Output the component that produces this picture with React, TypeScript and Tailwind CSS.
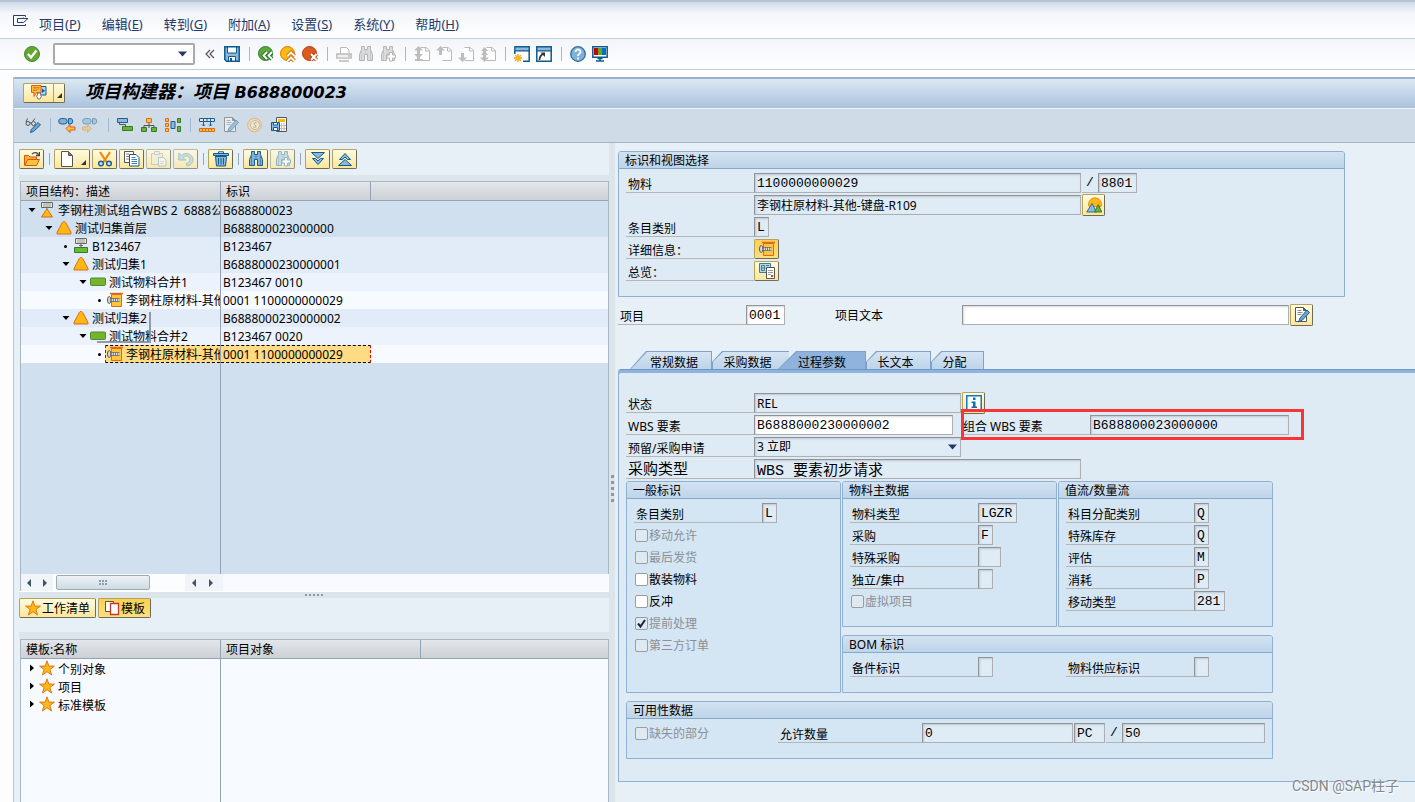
import React, { useState } from 'react';

type Kids = { children?: React.ReactNode };

/* ---------- icon primitives ---------- */

function Ico({ children, w = 16, h = 16 }: Kids & { w?: number; h?: number }) {
  return (
    <svg width={w} height={h} viewBox={`0 0 ${w} ${h}`} fill="none" aria-hidden="true" className="shrink-0">
      {children}
    </svg>
  );
}

const MenuIcon = () => (
  <Ico>
    <path d="M12.500 4V2.500H.5v10h12V11M4.500 5.500h6V4.500M4.500 5.500v4h6l4.500-4h-4.500" stroke="#2b3c66" />
  </Ico>
);
const OkIcon = () => (
  <Ico>
    <circle cx="8" cy="8" r="7.500" fill="#64a832" stroke="#3f8a2f" />
    <path d="M4 8l3 3.500L12.500 4.500" stroke="#fff" strokeWidth="2.200" />
  </Ico>
);
const SaveIcon = () => (
  <Ico>
    <path d="M.8.8h14.400v14.400H2.500L.8 13.500z" fill="#8db7dc" stroke="#0d5b8f" strokeWidth="1.500" />
    <path d="M3.500 1v6h9V1z" fill="#fff" stroke="#0d5b8f" />
    <path d="M4.500 10.500h7V15h-7z" fill="#fff" stroke="#0d5b8f" />
    <path d="M6 12h2v3H6z" fill="#0d5b8f" />
  </Ico>
);
const BackIcon = () => (
  <Ico>
    <circle cx="7.500" cy="7.500" r="7" fill="#5fa63b" stroke="#2f7d32" />
    <path d="M9 6L5.500 9.500 9 13M14 6l-3.500 3.500L14 13" stroke="#2f7d32" strokeWidth="4" />
    <path d="M9 6L5.500 9.500 9 13M14 6l-3.500 3.500L14 13" stroke="#fff" strokeWidth="1.800" />
  </Ico>
);
const ExitIcon = () => (
  <Ico>
    <circle cx="7.500" cy="7.500" r="7" fill="#fcb814" stroke="#dd7500" />
    <path d="M7.500 10L11 6.500l3.500 3.500M7.500 15l3.500-3.500 3.500 3.500" stroke="#dd7500" strokeWidth="4" />
    <path d="M7.500 10L11 6.500l3.500 3.500M7.500 15l3.500-3.500 3.500 3.500" stroke="#fff" strokeWidth="1.800" />
  </Ico>
);
const CancelIcon = () => (
  <Ico>
    <circle cx="7.500" cy="7.500" r="7" fill="#dc5a1e" stroke="#b83b12" />
    <path d="M9 8l5.500 6M14.500 8L9 14" stroke="#b83b12" strokeWidth="4" />
    <path d="M9 8l5.500 6M14.500 8L9 14" stroke="#fff" strokeWidth="2" />
  </Ico>
);
const PrintIcon = () => (
  <Ico>
    <path d="M4.500 7V1.500h6L13 4v3" fill="#fff" stroke="#b9b9b9" />
    <path d="M.8 8h14.400v4.200H.8z" fill="#eee" stroke="#b9b9b9" strokeWidth="1.300" />
    <path d="M12 10h2M3 15h10" stroke="#b9b9b9" strokeWidth="1.500" />
  </Ico>
);
function Binocular({ line, fill, plus }: { line: string; fill: string; plus?: boolean }) {
  return (
    <Ico>
      <path d="M3.500.500h3v3h3v-3h3v3l2 5v6h-5v-6h-3v6h-5v-6l2-5z" fill={fill} stroke={line} />
      <path d="M8 4v5M3.500 5v9M12.500 5v9" stroke={line} strokeOpacity=".5" />
      {plus && <path d="M9.500 6.500h3v2.500h3v3h-3v3h-3v-3h-2.500v-3h2.500z" fill="#fff" stroke={line} />}
    </Ico>
  );
}
function PageNav({ up, down, top, bottom }: { up?: boolean; down?: boolean; top?: boolean; bottom?: boolean }) {
  return (
    <Ico>
      <path d="M6.500 1.500h5.500l3.500 3v10H6.500" fill="#fff" stroke="#b9b9b9" />
      <path d="M11.500 1.500V5H15" stroke="#b9b9b9" />
      {up && <path d="M4.500 0l4.500 4.500H6V9H3V4.500H0z" fill="#bdbdbd" />}
      {down && <path d="M4.500 16L9 11.500H6V7H3v4.500H0z" fill="#bdbdbd" />}
      {top && <path d="M4.500 0L9 4.500H6V8h3l-3 3v2h3v2H1v-2h2v-2L0 8h3V4.500H0z" fill="#bdbdbd" />}
      {bottom && <path d="M4.500 16L9 11.500H6V9h2L6 6.500V5h2L4.500 1 1 5h2v1.500L1 9h2v2.500H0z" fill="#bdbdbd" />}
    </Ico>
  );
}
const NewSessionIcon = () => (
  <Ico>
    <path d="M.8.800h14.400v14.400H9" fill="#fff" stroke="#0d5b8f" strokeWidth="1.500" />
    <path d="M.8.800h14.400v4H.8z" fill="#8db7dc" stroke="#0d5b8f" strokeWidth="1.300" />
    <path d="M.8 5v3" stroke="#0d5b8f" strokeWidth="1.500" />
    <path d="M4 8v8M0 12h8M1.200 9.200l5.600 5.600M6.800 9.200l-5.600 5.600" stroke="#f3a21b" strokeWidth="1.400" />
    <circle cx="4" cy="12" r="2.300" fill="#fcb814" />
  </Ico>
);
const ShortcutIcon = () => (
  <Ico>
    <path d="M.8.800h14.400v14.400H.8z" fill="#fff" stroke="#0d5b8f" strokeWidth="1.500" />
    <path d="M.8.800h14.400v4H.8z" fill="#8db7dc" stroke="#0d5b8f" strokeWidth="1.300" />
    <path d="M3.500 14c0-3 1-4.500 3.500-6" stroke="#333" strokeWidth="1.700" />
    <path d="M4.500 6.500H9V11z" fill="#333" />
  </Ico>
);
const HelpIcon = () => (
  <Ico>
    <circle cx="8" cy="8" r="7.300" fill="#7fb0d8" stroke="#2f6f9f" strokeWidth="1.300" />
    <path d="M5.500 6c0-3.500 5.200-3.200 5 0C10.400 7.800 8 7.800 8 10" stroke="#fff" strokeWidth="1.800" />
    <path d="M7 11.500h2v2H7z" fill="#fff" />
  </Ico>
);
const MonitorIcon = () => (
  <Ico>
    <path d="M.8.800h14.400v10.400H.8z" fill="#fff" stroke="#0d5b8f" strokeWidth="1.500" />
    <path d="M2 2h4v7H2z" fill="#c90000" />
    <path d="M6 2h4v7H6z" fill="#63a820" />
    <path d="M10 2h4v7h-4z" fill="#0a6fb8" />
    <path d="M8 11v4M4 15h8M5.500 12.500h5" stroke="#0d5b8f" strokeWidth="1.500" />
  </Ico>
);
const BuilderIcon = () => (
  <Ico>
    <path d="M9 1.500h6v8.500h-6z" fill="#b9d3ea" stroke="#0d5b8f" />
    <path d="M11 3.500l3 2.300-3 2.200z" fill="#0d5b8f" />
    <path d="M.5.500h9.500v7H5.500L3 11.500V7.500H.5z" fill="#fcc23c" stroke="#dd5a1c" />
    <path d="M2 2.500h6.500M2 4h6.500M2 5.500h4" stroke="#dd6b1c" strokeWidth=".8" />
    <path d="M6.500 10V8h3v2l1 1-1.500 3h-2l-1.500-3z" fill="#fff" stroke="#777" />
  </Ico>
);
const ToggleIcon = () => (
  <Ico>
    <circle cx="3" cy="6.500" r="2" stroke="#555" />
    <circle cx="8.500" cy="6.500" r="2" stroke="#555" />
    <path d="M5 6h1.500M1 5l1.500-3.500M8 4l2-2.500" stroke="#555" />
    <path d="M13 5.500l2.500 2.500-7 6.500-3 1 .8-3z" fill="#6fa4cf" stroke="#1d5f8f" />
  </Ico>
);
function ArrowChip({ left, faded }: { left?: boolean; faded?: boolean }) {
  return (
    <svg width="18" height="16" viewBox="0 0 18 16" fill="none" className={faded ? 'opacity-50' : ''} aria-hidden="true">
      <rect x=".7" y="1.500" width="8.500" height="5.500" rx="2.700" fill="#7fb0d8" stroke="#1d5f8f" />
      <path d="M10.500 1.500h1.500a2.700 2.700 0 010 5.500h-1.500z" fill="#7fb0d8" stroke="#1d5f8f" />
      {left ? (
        <path d="M8 11.500l4-4v2.500h5v3h-5v2.500z" fill="#fcc23c" stroke="#dd5a1c" />
      ) : (
        <path d="M9.500 11.500l-4-4v2.500H.500v3h5v2.500z" fill="#fcc23c" stroke="#dd8a3c" />
      )}
    </svg>
  );
}
const BarsIcon = () => (
  <Ico>
    <path d="M.5 1.500h10v4h-10z" fill="#8db7dc" stroke="#1d5f8f" />
    <path d="M5.500 9.500h10v4h-10z" fill="#6fb02f" stroke="#2f7d32" />
    <path d="M2.500 6v1.500h6v2" stroke="#555" />
  </Ico>
);
const HierIcon = () => (
  <Ico>
    <path d="M8 6v2.500M3 11V8.500h10V11M8 8v3" stroke="#555" />
    <path d="M5.500 1.500h5v4h-5z" fill="#fcc23c" stroke="#dd6b1c" />
    <path d="M.500 10.500h5v4h-5zM10.500 10.500h5v4h-5z" fill="#6fb02f" stroke="#2f7d32" />
  </Ico>
);
const NetIcon = () => (
  <Ico>
    <path d="M.5 1.500h3v3h-3zM.5 6.500h3v3h-3zM.5 11.500h3v3h-3z" fill="#fcc23c" stroke="#dd6b1c" />
    <path d="M6 4.500h4v7H6z" fill="#8db7dc" stroke="#1d5f8f" />
    <path d="M12.500 1.500h3v4h-3zM12.500 9.500h3v5h-3z" fill="#6fb02f" stroke="#2f7d32" />
  </Ico>
);
const PlanIcon = () => (
  <Ico>
    <path d="M.5 1.500h15v3H.5zM4.500 1.500v3M8 1.500v3M11.500 1.500v3" fill="#dbe7f1" stroke="#1d5f8f" />
    <path d="M4.500 5v4M3 7.500l1.500 1.500L6 7.500M11.500 5v4M10 7.500l1.500 1.500L13 7.500" stroke="#1d5f8f" />
    <path d="M.5 11.500h15v3H.5z" fill="#fcc23c" stroke="#dd6b1c" />
    <path d="M3.500 11.500v3M6.500 11.500v3M9.500 11.500v3M12.500 11.500v3" stroke="#dd6b1c" />
  </Ico>
);
const DocEditIcon = ({ faded = true }: { faded?: boolean }) => (
  <svg width="16" height="16" viewBox="0 0 16 16" fill="none" className={faded ? 'opacity-50' : ''} aria-hidden="true">
    <path d="M1.500.500h8l3 3v11h-11z" fill="#fff" stroke="#555" />
    <path d="M9.500.500v3h3" fill="#555" stroke="#555" />
    <path d="M3.500 3.500h4M3.500 5.500h5M3.500 7.500h4" stroke="#888" />
    <path d="M13 3l2.500 2.500-7 7.500-4 2 1.500-4z" fill="#6fa4cf" stroke="#1d5f8f" />
  </svg>
);
const CoinIcon = () => (
  <svg width="16" height="16" viewBox="0 0 16 16" fill="none" className="opacity-60" aria-hidden="true">
    <circle cx="7.500" cy="8" r="6.800" fill="#fbdc9b" stroke="#d99a50" />
    <circle cx="8" cy="8" r="4.500" fill="#fff1cf" stroke="#d99a50" />
    <path d="M9.500 6C7.500 5 6 6.500 8 8s.5 3-1.500 2" stroke="#a87030" />
  </svg>
);
const SheetSaveIcon = () => (
  <Ico>
    <path d="M5.500.500h10v14h-10z" fill="#fff" stroke="#555" />
    <path d="M7 2h7v3H7z" fill="#fcb814" />
    <path d="M10.500 6v8M13 6v8M9 8.500h6M9 11.500h6" stroke="#bbb" />
    <path d="M.5 5.500h8v8h-8z" fill="#8db7dc" stroke="#0d5b8f" />
    <path d="M2.500 5.500h4V8h-4zM2.500 10.500h4v3h-4z" fill="#fff" stroke="#0d5b8f" />
  </Ico>
);
const FolderIcon = () => (
  <Ico>
    <path d="M.5 14V4.500h4l1.500 1.500h6.500v3" fill="#fcb814" stroke="#d2551c" />
    <path d="M.7 14.500l3-6h11.800l-3 6z" fill="#fcc23c" stroke="#d2551c" />
    <path d="M8 3c2-2 5-2 6.500.5M15.500 1v3.500H12" stroke="#444" strokeWidth="1.300" />
  </Ico>
);
const NewDocIcon = () => (
  <Ico>
    <path d="M2.500.500h7l4 4v11h-11z" fill="#fff" stroke="#555" />
    <path d="M9.500.500v4h4" fill="#777" stroke="#555" />
  </Ico>
);
const CutIcon = () => (
  <Ico>
    <path d="M3 1l6.500 10M13 1L6.500 11" stroke="#ee8a0c" strokeWidth="2.200" />
    <circle cx="4" cy="12.500" r="2.300" fill="#cfe3f3" stroke="#1d5f8f" strokeWidth="1.500" />
    <circle cx="12" cy="12.500" r="2.300" fill="#cfe3f3" stroke="#1d5f8f" strokeWidth="1.500" />
  </Ico>
);
const CopyIcon = () => (
  <Ico>
    <path d="M.5.500h9v11h-9z" fill="#fff" stroke="#555" />
    <path d="M2 3h3M2 5.500h3M2 8h3" stroke="#888" />
    <path d="M5.500 3.500h6.500l3 3v8.500H5.500z" fill="#fff" stroke="#0d5b8f" />
    <path d="M7.500 6.500h4M7.500 8.500h5.500M7.500 10.500h5.500M7.500 12.500h5.500" stroke="#3a83b8" />
  </Ico>
);
const PasteIcon = () => (
  <svg width="16" height="16" viewBox="0 0 16 16" fill="none" className="opacity-60" aria-hidden="true">
    <path d="M.5 2.500h11v11H.5z" fill="#f5ecc8" stroke="#999" />
    <path d="M3.500.500h5v3h-5z" fill="#eee" stroke="#999" />
    <path d="M7.500 6.500h5l2.500 2.500v6H7.500z" fill="#fff" stroke="#5b94b8" />
    <path d="M9 10.500h4M9 12.500h4" stroke="#9bbcd0" />
  </svg>
);
const UndoIcon = () => (
  <svg width="16" height="16" viewBox="0 0 16 16" fill="none" className="opacity-70" aria-hidden="true">
    <path d="M.8 2v7h7L5.200 6.500c2-2 5.500-2 6.500.5s-1 5-3.500 5.500l1 2.500c4.800-1 6.800-5 5.300-8.500S7.500.500 3.300 4.500z" fill="#a8c9dc" stroke="#5b94a8" />
  </svg>
);
const TrashIcon = () => (
  <Ico>
    <path d="M2.500 5.500h11l-1 9.500h-9z" fill="#8db7dc" stroke="#0d5b8f" />
    <path d="M.5 2.500h15v2H.5z" fill="#8db7dc" stroke="#0d5b8f" />
    <path d="M5.500 2.500V.800h5v1.700M5.500 7v6.500M8 7v6.500M10.500 7v6.500" stroke="#0d5b8f" />
  </Ico>
);
const ExpandIcon = () => (
  <Ico>
    <path d="M1.500 1.500h13L8 7.500z" fill="#8db7dc" stroke="#0d5b8f" />
    <path d="M2.500 7.500h3L8 10l2.500-2.500h3L8 13.500z" fill="#8db7dc" stroke="#0d5b8f" />
  </Ico>
);
const CollapseIcon = () => (
  <Ico>
    <path d="M1.500 14.500h13L8 8.500z" fill="#8db7dc" stroke="#0d5b8f" />
    <path d="M2.500 8.500h3L8 6l2.500 2.500h3L8 2.500z" fill="#8db7dc" stroke="#0d5b8f" />
  </Ico>
);
const ProjectIcon = () => (
  <Ico>
    <path d="M2.500.500h11v5h-11z" fill="#e8ecd8" stroke="#666" />
    <path d="M4 2h8M4 4h8" stroke="#888" strokeWidth=".8" />
    <path d="M8 6v2" stroke="#666" />
    <path d="M7.500 7.500h1l5 7.500h-11z" fill="#fcb814" stroke="#e2661c" />
  </Ico>
);
const WbsIcon = () => (
  <Ico>
    <path d="M7.300 1.500h1.400l1 1 5.300 10v1.500H1v-1.500l5.300-10z" fill="#fcb814" stroke="#e2661c" />
  </Ico>
);
const NetworkIcon = () => (
  <Ico>
    <path d="M2.500.500h11v5h-11z" fill="#e8ecd8" stroke="#666" />
    <path d="M4 2h8M4 4h8" stroke="#888" strokeWidth=".8" />
    <path d="M8 6v4M6 7.500h4" stroke="#666" />
    <path d="M1.500 9.500h13v5h-13z" fill="#6fb82f" stroke="#2f7d32" />
  </Ico>
);
const ActivityIcon = () => (
  <Ico>
    <rect x=".5" y="4" width="15" height="7.500" rx="1" fill="#76b52a" stroke="#4a8a3a" />
  </Ico>
);
const MaterialIcon = () => (
  <Ico>
    <path d="M4.500 2.500h10v12h-10z" fill="#fcc63c" stroke="#e2661c" />
    <path d="M3 1.500h13" stroke="#e2661c" strokeWidth="1.500" />
    <path d="M4 8h8.500" stroke="#666" strokeWidth="4" />
    <path d="M4.500 8h8" stroke="#e4e0d4" strokeWidth="2.600" strokeDasharray="1.400 .8" />
    <ellipse cx="2.200" cy="8" rx="1.700" ry="3.500" fill="#ddd" stroke="#555" />
  </Ico>
);
const OverviewIcon = () => (
  <Ico>
    <path d="M.5.500h11v9H.5z" fill="#b9d8e0" stroke="#3a7f98" />
    <path d="M2.500 2.500h3v5h-3zM7 2.500h3M3 5h3" stroke="#3a7f98" />
    <path d="M7.500 4.500h8v11h-8z" fill="#fff" stroke="#555" />
    <path d="M9 7.500h5M9 9.500h5M9 11.500h3" stroke="#999" />
    <path d="M12 12h2v2h-2z" fill="#d33" />
  </Ico>
);
const SceneIcon = () => (
  <Ico>
    <path d="M3 9.500a6.400 6.400 0 1112 0z" fill="#fcb814" stroke="#ee8a1c" />
    <path d="M.7 15L6 6.500l4.500 8.500z" fill="#8db7dc" stroke="#2b6f9a" />
    <path d="M8.500 15l3.800-7.500 3.400 7.500z" fill="#6fb02f" stroke="#2f7d32" />
  </Ico>
);
const InfoIcon = () => (
  <Ico>
    <path d="M.8.800h14.400v14.400H.8z" fill="#fff" stroke="#0a7ac0" strokeWidth="1.500" />
    <path d="M7 2.500h2.500V5H7zM5.500 6.500h4v5H11V13H5.500v-1.500H7V8H5.500z" fill="#0a6fb0" />
  </Ico>
);
const StarIcon = () => (
  <Ico>
    <path
      d="M8 .8l1.900 5.300h5.500l-4.500 3.400 1.700 5.500L8 11.700 3.400 15l1.700-5.500L.6 6.100h5.500z"
      fill="#fcb814"
      stroke="#dd7a1c"
    />
  </Ico>
);
const TemplateIcon = () => (
  <Ico>
    <path d="M1.500 1.500h8v10h-8z" fill="#fff" stroke="#555" />
    <path d="M6.500 3.500h8v11h-8z" fill="#fff" stroke="#c0392b" strokeWidth="1.300" />
  </Ico>
);
const Caret = ({ open }: { open: boolean }) => (
  <Ico w={8} h={8}>{open ? <path d="M.5 2h7L4 6z" fill="#000" /> : <path d="M2 .5v7L6 4z" fill="#000" />}</Ico>
);
const DropMark = () => (
  <Ico w={9} h={6}>
    <path d="M0 .5h9L4.500 5.500z" fill="#26396b" />
  </Ico>
);
const ScrollMark = ({ right }: { right?: boolean }) => (
  <Ico w={8} h={10}>
    <path d={right ? 'M2 1v8l4-4z' : 'M6 1v8L2 5z'} fill="#3f5468" />
  </Ico>
);
const MenuCorner = () => (
  <Ico w={5} h={5}>
    <path d="M5 0v5H0z" fill="#333" />
  </Ico>
);

/* ---------- shared controls ---------- */

function ToolButton({ label, children, wide }: Kids & { label: string; wide?: boolean }) {
  return (
    <button type="button" aria-label={label} className={`flex h-6 items-center justify-center ${wide ? 'w-6' : 'w-[22px]'}`}>
      {children}
    </button>
  );
}
const Sep = ({ narrow }: { narrow?: boolean }) => (
  <span className={`flex justify-center ${narrow ? 'w-[10px]' : 'w-3'}`}>
    <span className="h-[14px] w-px bg-[#9dbbd8]" />
  </span>
);

const goldBtn =
  'flex items-center justify-center rounded-[2px] border border-[#6f6a55] border-t-[#b5a35c] border-l-[#b5a35c] bg-linear-to-b from-[#fffbe0] to-[#fbe69a]';
const goldPressed =
  'flex items-center justify-center rounded-[2px] border border-[#6f6a55] border-t-[#b5a35c] border-l-[#b5a35c] bg-linear-to-b from-[#fbd050] to-[#fddf80]';

function TreeButton({ label, children, faded }: Kids & { label: string; faded?: boolean }) {
  return (
    <button type="button" aria-label={label} disabled={faded} className={`${goldBtn} h-5 w-[25px] ${faded ? 'opacity-70' : ''}`}>
      {children}
    </button>
  );
}
const BtnSep = () => (
  <span className="flex w-[6px] justify-center">
    <span className="h-3 w-px bg-[#9aa7b3]" />
  </span>
);

const fieldBase =
  'h-5 shrink-0 border border-[#adafb2] border-t-[#909398] border-l-[#909398] px-[2px] leading-[18px] text-black shadow-[inset_1px_1px_2px_rgba(90,100,110,0.25)] outline-none';
const mono = "font-['Liberation_Mono','Noto_Sans_CJK_SC',monospace] text-[13px]";
const monoLarge = "font-['Liberation_Mono','Noto_Sans_CJK_SC',monospace] text-[15px]";

function Field({
  id,
  label,
  value,
  width,
  edit,
  font = mono,
}: {
  id?: string;
  label?: string;
  value?: string;
  width: string;
  edit?: boolean;
  font?: string;
}) {
  return (
    <input
      id={id}
      aria-label={label}
      readOnly={!edit}
      defaultValue={value}
      className={`${fieldBase} ${width} ${font} ${edit ? 'bg-white' : 'bg-[#dfebf5]'}`}
    />
  );
}

function Label({
  htmlFor,
  children,
  width = 'w-32',
  size = 'text-xs leading-6',
}: Kids & { htmlFor?: string; width?: string; size?: string }) {
  return (
    <label htmlFor={htmlFor} className={`${width} ${size} h-5 shrink-0 border-b border-[#b4b6b8] px-[2px] whitespace-pre`}>
      {children}
    </label>
  );
}

function Row({ children }: Kids) {
  return <div className="flex h-5 items-center">{children}</div>;
}

function Slash() {
  return (
    <span className="ml-px h-5 w-4 border-b border-[#b4b6b8] text-center font-['Liberation_Mono',monospace] text-[13px] leading-5">/</span>
  );
}

function Check({ label, checked, disabled }: { label: string; checked?: boolean; disabled?: boolean }) {
  return (
    <label className={`flex h-5 items-center pl-px text-xs ${disabled ? 'text-[#8b9097]' : 'text-black'}`}>
      <span className="relative mr-px flex">
        <input
          type="checkbox"
          defaultChecked={checked}
          disabled={disabled}
          className={`peer size-[13px] appearance-none rounded-[2px] border border-[#9a9da0] ${disabled ? 'bg-[#dfe9f2]' : 'bg-white'}`}
        />
        <svg viewBox="0 0 13 13" className="pointer-events-none absolute inset-0 hidden size-[13px] peer-checked:block" fill="none" aria-hidden="true">
          <path d="M3 6.500l2.500 3L10 3" stroke="#1c2440" strokeWidth="2" />
        </svg>
      </span>
      <span className="pt-[2px] leading-5">{label}</span>
    </label>
  );
}

function Group({ title, children, className = '', body = 'bg-[#d4e5f3]' }: Kids & { title: string; className?: string; body?: string }) {
  return (
    <section className={`flex flex-col rounded-t-[3px] border border-[#8fb0d0] ${body} ${className}`}>
      <h2 className="h-[17px] rounded-t-[2px] border-b border-[#86a9cc] bg-linear-to-b from-[#d3e2f1] to-[#bed4e9] px-[6px] text-xs leading-[18px]">
        {title}
      </h2>
      <div className="flex flex-col gap-[2px] px-[7px] pt-1">{children}</div>
    </section>
  );
}

/* ---------- header ---------- */

const menus: [string, string][] = [
  ['项目', 'P'],
  ['编辑', 'E'],
  ['转到', 'G'],
  ['附加', 'A'],
  ['设置', 'S'],
  ['系统', 'Y'],
  ['帮助', 'H'],
];

function MenuBar() {
  return (
    <nav className="flex h-[39px] items-center border-t-2 border-b border-t-[#b9c3d3] border-b-[#c5cbd8] bg-linear-to-b from-[#cfdbe9] via-[#f3f6fa] via-30% to-white pt-[7px] pl-[13px]">
      <span className="mr-[10px] mb-[6px]">
        <MenuIcon />
      </span>
      <div className="flex gap-[21px] text-[13px] text-[#26396b]">
        {menus.map(([name, key]) => (
          <button type="button" key={key} className="leading-5">
            {name}(<u>{key}</u>)
          </button>
        ))}
      </div>
    </nav>
  );
}

function SystemBar() {
  const grey = { line: '#b5b5b5', fill: '#dcdcdc' };
  return (
    <div className="flex h-[31px] items-center border-b border-[#c8ccd4] bg-linear-to-b from-[#f2f5f9] to-white pl-[21px]">
      <ToolButton label="输入"><OkIcon /></ToolButton>
      <div className="mr-1 ml-[10px] flex h-[22px] w-[142px] items-center rounded-[2px] border-2 border-[#a9a9a9] bg-white pr-[6px]">
        <input aria-label="命令字段" className="min-w-0 flex-1 px-1 text-xs outline-none" />
        <button type="button" aria-label="历史记录"><DropMark /></button>
      </div>
      <ToolButton label="收起">
        <Ico w={10} h={10}><path d="M5 1L1 5l4 4M9 1L5 5l4 4" stroke="#555" strokeWidth="1.200" /></Ico>
      </ToolButton>
      <ToolButton label="保存"><SaveIcon /></ToolButton>
      <Sep />
      <ToolButton label="返回"><BackIcon /></ToolButton>
      <ToolButton label="退出"><ExitIcon /></ToolButton>
      <ToolButton label="取消"><CancelIcon /></ToolButton>
      <Sep />
      <ToolButton label="打印"><PrintIcon /></ToolButton>
      <ToolButton label="查找"><Binocular {...grey} /></ToolButton>
      <ToolButton label="继续查找"><Binocular {...grey} plus /></ToolButton>
      <Sep />
      <ToolButton label="首页"><PageNav top /></ToolButton>
      <ToolButton label="上一页"><PageNav up /></ToolButton>
      <ToolButton label="下一页"><PageNav down /></ToolButton>
      <ToolButton label="末页"><PageNav bottom /></ToolButton>
      <Sep />
      <ToolButton label="新建会话"><NewSessionIcon /></ToolButton>
      <ToolButton label="快捷方式"><ShortcutIcon /></ToolButton>
      <Sep />
      <ToolButton label="帮助"><HelpIcon /></ToolButton>
      <ToolButton label="自定义布局"><MonitorIcon /></ToolButton>
    </div>
  );
}

function TitleBar() {
  return (
    <div className="flex h-8 items-center border-t-2 border-b border-t-[#98b1cd] border-b-[#eef4fa] bg-linear-to-b from-[#dbe8f3] to-[#abc2dc] pb-[2px] pl-[9px]">
      <button type="button" aria-label="项目构建器" className={`${goldBtn} h-5 w-[42px]`}>
        <span className="flex h-full flex-1 items-center justify-center border-r border-[#b5a35c]"><BuilderIcon /></span>
        <span className="flex h-full w-[10px] items-end justify-center pb-1">
          <MenuCorner />
        </span>
      </button>
      <h1 className="ml-5 font-['DejaVu_Sans','Noto_Sans_CJK_SC',sans-serif] text-base leading-6 font-bold whitespace-pre italic">
        <span className="text-lg leading-6">项目构建器：项目</span> B688800023
      </h1>
    </div>
  );
}

function AppBar() {
  return (
    <div className="flex h-[34px] items-center border-b border-[#9fb6ca] bg-[#cfdce7] pb-[2px] pl-[7px]">
      <ToolButton wide label="显示/更改"><ToggleIcon /></ToolButton>
      <Sep narrow />
      <ToolButton wide label="上一个"><ArrowChip left /></ToolButton>
      <ToolButton wide label="下一个"><ArrowChip faded /></ToolButton>
      <Sep narrow />
      <ToolButton wide label="计划板"><BarsIcon /></ToolButton>
      <ToolButton wide label="层次图"><HierIcon /></ToolButton>
      <ToolButton wide label="网络图"><NetIcon /></ToolButton>
      <Sep narrow />
      <ToolButton wide label="日程安排"><PlanIcon /></ToolButton>
      <ToolButton wide label="编辑"><DocEditIcon /></ToolButton>
      <ToolButton wide label="成本"><CoinIcon /></ToolButton>
      <ToolButton wide label="保存布局"><SheetSaveIcon /></ToolButton>
    </div>
  );
}

/* ---------- left pane ---------- */

type Node = { level: number; icon: React.ReactNode; text: string; id: string; tone: string; leaf?: boolean; selected?: boolean; mark?: boolean };

const indent = ['pl-[5px]', 'pl-[22px]', 'pl-[39px]', 'pl-[56px]', 'pl-[73px]'];

const nodes: Node[] = [
  { level: 0, icon: <ProjectIcon />, text: '李钢柱测试组合WBS 2  6888公', id: 'B688800023', tone: 'bg-[#d0e0ef]' },
  { level: 1, icon: <WbsIcon />, text: '测试归集首层', id: 'B688800023000000', tone: 'bg-[#d0e0ef]' },
  { level: 2, icon: <NetworkIcon />, text: 'B123467', id: 'B123467', tone: 'bg-[#e2ebf8]', leaf: true },
  { level: 2, icon: <WbsIcon />, text: '测试归集1', id: 'B6888000230000001', tone: 'bg-[#e2ebf8]' },
  { level: 3, icon: <ActivityIcon />, text: '测试物料合并1', id: 'B123467 0010', tone: 'bg-[#ecf3fc]' },
  { level: 4, icon: <MaterialIcon />, text: '李钢柱原材料-其他', id: '0001 1100000000029', tone: 'bg-[#f7faff]', leaf: true },
  { level: 2, icon: <WbsIcon />, text: '测试归集2', id: 'B6888000230000002', tone: 'bg-[#e2ebf8]' },
  { level: 3, icon: <ActivityIcon />, text: '测试物料合并2', id: 'B123467 0020', tone: 'bg-[#ecf3fc]', mark: true },
  { level: 4, icon: <MaterialIcon />, text: '李钢柱原材料-其他', id: '0001 1100000000029', tone: 'bg-[#f7faff]', leaf: true, selected: true },
];

const th =
  'h-5 border-t border-b border-t-[#a9b6c3] border-b-[#94a3b3] bg-linear-to-b from-[#e3e6ea] to-[#ccd1d6] pt-[2px] pb-0 pl-[5px] text-left text-xs leading-4 font-normal';

function ProjectTree() {
  return (
    <div className="ml-px flex h-[393px] flex-col border-x border-[#a9b6c3] bg-[#d0e0ef]">
      <table className="w-full table-fixed border-separate border-spacing-0 text-xs">
        <thead>
          <tr>
            <th className={`${th} w-[200px] border-r border-r-[#94a3b3]`}>项目结构：描述</th>
            <th className={`${th} w-[150px] border-r border-r-[#94a3b3]`}>标识</th>
            <th className={th} aria-label="其他" />
          </tr>
        </thead>
        <tbody>
          {nodes.map((n, i) => (
            <tr key={i} className={n.tone}>
              <td className="relative h-[18px] border-r border-[#94a3b3] p-0">
                <div className={`flex h-[18px] items-center overflow-hidden ${indent[n.level]}`}>
                  <span className="flex w-[11px] shrink-0 justify-center">
                    {n.leaf ? <span className="size-[3px] rounded-full bg-black" /> : <Caret open />}
                  </span>
                  <span
                    className={`flex h-[18px] min-w-0 flex-1 items-center gap-[3px] overflow-hidden pl-px leading-4 whitespace-pre ${
                      n.selected ? 'border-y border-l border-dashed border-y-black border-l-red-600 bg-[#ffdb83]' : 'border-l border-transparent'
                    }`}
                  >
                    {n.icon}
                    <span className="pt-[2px]">{n.text}</span>
                  </span>
                </div>
                {n.mark && (
                  <span className="pointer-events-none absolute right-[69px] bottom-[2px] h-[31px] w-[54px] border-r-2 border-b-2 border-[#7d8791] opacity-80" />
                )}
              </td>
              <td
                className={`h-[18px] p-0 pt-[2px] pl-[2px] leading-[14px] whitespace-pre ${
                  n.selected ? 'border-y border-r border-dashed border-y-black border-r-red-600 bg-[#ffdb83]' : ''
                }`}
              >
                {n.id}
              </td>
              <td />
            </tr>
          ))}
        </tbody>
      </table>
      <div className="w-[200px] flex-1 border-r border-[#94a3b3]" />
    </div>
  );
}

function HScroll() {
  return (
    <div className="ml-px flex h-[17px] items-center border-l border-[#a9b6c3] bg-[#f7fbff]">
      <div className="flex w-[202px] items-center bg-[#f1f5fa] pr-1">
        <button type="button" aria-label="向左" className="flex h-[17px] w-4 items-center justify-center"><ScrollMark /></button>
        <button type="button" aria-label="向右" className="flex h-[17px] w-4 items-center justify-center"><ScrollMark right /></button>
        <div className="flex h-[17px] flex-1 items-center bg-[#fcfdff] pl-[3px]">
          <div className="flex h-[15px] w-[94px] items-center justify-center rounded-[2px] border border-[#9aabba] bg-linear-to-b from-[#edf2f6] to-[#cfdbe4]">
            <Ico w={9} h={6}><path d="M0 1h9M0 4h9" stroke="#8b9cab" strokeWidth="2" strokeDasharray="2 1" /></Ico>
          </div>
        </div>
        <button type="button" aria-label="向左滚动" className="flex h-[17px] w-[17px] items-center justify-center"><ScrollMark /></button>
        <button type="button" aria-label="向右滚动" className="flex h-[17px] w-[17px] items-center justify-center"><ScrollMark right /></button>
      </div>
    </div>
  );
}

function TemplateTable() {
  return (
    <div className="ml-px flex flex-1 flex-col border-x border-[#a9b6c3] bg-[#f7faff]">
      <table className="w-full table-fixed border-separate border-spacing-0 text-xs">
        <thead>
          <tr>
            <th className={`${th} w-[200px] border-r border-r-[#94a3b3]`}>模板:名称</th>
            <th className={`${th} w-[200px] border-r border-r-[#94a3b3]`}>项目对象</th>
            <th className={th} aria-label="其他" />
          </tr>
        </thead>
        <tbody>
          {['个别对象', '项目', '标准模板'].map((t) => (
            <tr key={t}>
              <td className="h-[18px] border-r border-[#94a3b3] p-0">
                <div className="flex h-[18px] items-center pl-[7px] leading-4">
                  <Caret open={false} />
                  <span className="ml-[3px] flex items-center gap-[3px]">
                    <StarIcon />
                    <span className="pt-1">{t}</span>
                  </span>
                </div>
              </td>
              <td />
              <td />
            </tr>
          ))}
        </tbody>
      </table>
      <div className="w-[200px] flex-1 border-r border-[#94a3b3]" />
    </div>
  );
}

function LeftPane() {
  return (
    <div className="flex w-[595px] shrink-0 flex-col pl-[5px]">
      <div className="flex items-center gap-[2px] pt-[6px] pb-[6px]">
        <TreeButton label="打开"><FolderIcon /></TreeButton>
        <BtnSep />
        <button type="button" aria-label="创建" className={`${goldBtn} h-5 w-9 gap-[6px]`}>
          <NewDocIcon />
          <span className="self-end pb-[3px]"><MenuCorner /></span>
        </button>
        <TreeButton label="剪切"><CutIcon /></TreeButton>
        <TreeButton label="复制"><CopyIcon /></TreeButton>
        <TreeButton label="粘贴" faded><PasteIcon /></TreeButton>
        <TreeButton label="撤销" faded><UndoIcon /></TreeButton>
        <BtnSep />
        <TreeButton label="删除"><TrashIcon /></TreeButton>
        <BtnSep />
        <TreeButton label="查找"><Binocular line="#1d5f8f" fill="#7fb0d8" /></TreeButton>
        <TreeButton label="继续查找" faded><Binocular line="#6f9fae" fill="#b5d0d8" plus /></TreeButton>
        <BtnSep />
        <TreeButton label="展开"><ExpandIcon /></TreeButton>
        <TreeButton label="折叠"><CollapseIcon /></TreeButton>
      </div>
      <div className="h-[6px] bg-[#dbe5ea]" />
      <ProjectTree />
      <HScroll />
      <div className="flex h-[7px] items-center justify-center gap-[2px] border-t border-white bg-[#dbe5ea]">
        {[0, 1, 2, 3, 4].map((i) => (
          <span key={i} className="size-[2px] bg-[#8c99a8]" />
        ))}
      </div>
      <div className="flex gap-[2px] pb-[14px] text-xs leading-4">
        <button type="button" className={`${goldBtn} h-5 w-[77px] gap-px`}>
          <StarIcon />
          <span className="pt-[2px]">工作清单</span>
        </button>
        <button type="button" aria-pressed="true" className={`${goldPressed} h-5 w-[53px] gap-px`}>
          <TemplateIcon />
          <span className="pt-[2px]">模板</span>
        </button>
      </div>
      <div className="h-[7px] bg-[#dbe5ea]" />
      <TemplateTable />
    </div>
  );
}

function VSplitter() {
  return (
    <div className="flex w-[6px] shrink-0 flex-col items-center justify-center gap-[3px] bg-[#dbe5ea] pt-8">
      {[0, 1, 2, 3, 4].map((i) => (
        <span key={i} className="size-[3px] bg-[#8c99a8]" />
      ))}
    </div>
  );
}

/* ---------- right pane ---------- */

const tabs = [
  {
    name: '常规数据',
    box: 'w-[82px] [clip-path:polygon(0_100%,16px_0,100%_0,100%_100%)]',
    inner: '[clip-path:polygon(1px_100%,17px_1px,81px_1px,81px_100%)] pl-[6px]',
  },
  {
    name: '采购数据',
    box: 'w-[77px] [clip-path:polygon(0_100%,0_60%,10px_0,100%_0,100%_100%)]',
    inner: '[clip-path:polygon(1px_100%,1px_60%,11px_1px,100%_1px,100%_100%)] pr-[6px]',
  },
  {
    name: '过程参数',
    box: '-ml-[11px] w-[88px] [clip-path:polygon(0_100%,18px_0,100%_0,100%_100%)]',
    inner: '[clip-path:polygon(1px_100%,19px_1px,87px_1px,87px_100%)]',
  },
  {
    name: '长文本',
    box: 'w-[65px] [clip-path:polygon(0_100%,0_60%,10px_0,100%_0,100%_100%)]',
    inner: '[clip-path:polygon(1px_100%,1px_60%,11px_1px,64px_1px,64px_100%)] pr-[6px]',
  },
  {
    name: '分配',
    box: 'w-[53px] [clip-path:polygon(0_100%,0_60%,10px_0,100%_0,100%_100%)]',
    inner: '[clip-path:polygon(1px_100%,1px_60%,11px_1px,52px_1px,52px_100%)] pr-[6px]',
  },
];

function TabStrip() {
  const [active, setActive] = useState(2);
  return (
    <div role="tablist" className="flex h-[18px] pl-3 text-xs">
      {tabs.map((t, i) => (
        <button
          type="button"
          role="tab"
          key={t.name}
          aria-selected={i === active}
          onClick={() => setActive(i)}
          className={`h-[18px] bg-[#7fa3c6] ${t.box}`}
        >
          <span
            className={`flex h-[18px] items-center justify-center pt-[6px] whitespace-nowrap ${t.inner} ${
              i === active ? 'bg-[#8fb3dc]' : 'bg-linear-to-b from-[#d6e5f3] to-[#bdd4ea]'
            }`}
          >
            {t.name}
          </span>
        </button>
      ))}
    </div>
  );
}

const squareBtn = 'h-[22px] w-[23px] shrink-0';

function HeaderGroup() {
  return (
    <Group title="标识和视图选择" className="h-[146px] w-[727px] max-w-full" body="bg-[#deeaf4]">
      <Row>
        <Label htmlFor="mat">物料</Label>
        <Field id="mat" value="1100000000029" width="w-[327px]" />
        <Slash />
        <Field label="工厂" value="8801" width="w-[39px]" />
      </Row>
      <Row>
        <span className="w-32" />
        <Field label="物料描述" value="李钢柱原材料-其他-键盘-R109" width="w-[327px]" font="text-xs" />
        <button type="button" aria-label="图片" className={`${goldBtn} ${squareBtn} ml-px`}><SceneIcon /></button>
      </Row>
      <Row>
        <Label htmlFor="cat">条目类别</Label>
        <Field id="cat" value="L" width="w-[15px]" />
      </Row>
      <Row>
        <Label htmlFor="detail">详细信息：</Label>
        <button id="detail" type="button" className={`${goldPressed} h-5 w-[25px]`}><MaterialIcon /></button>
      </Row>
      <Row>
        <Label htmlFor="overview">总览：</Label>
        <button id="overview" type="button" className={`${goldBtn} h-5 w-[25px]`}><OverviewIcon /></button>
      </Row>
    </Group>
  );
}

function ItemRow() {
  return (
    <div className="mt-2 flex h-5 items-center">
      <Label htmlFor="item">项目</Label>
      <Field id="item" value="0001" width="w-[39px]" edit />
      <label htmlFor="itemText" className="ml-[50px] w-[127px] pt-[2px] text-xs leading-5">项目文本</label>
      <Field id="itemText" width="w-[327px]" edit />
      <button type="button" aria-label="编辑文本" className={`${goldBtn} ${squareBtn} ml-px`}><DocEditIcon faded={false} /></button>
    </div>
  );
}

function ParamGroups() {
  return (
    <div className="flex w-[647px] flex-col gap-2">
      <div className="grid grid-cols-3 gap-px gap-y-2">
        <Group title="一般标识" className="row-span-2">
          <Row><Label htmlFor="g1">条目类别</Label><Field id="g1" value="L" width="w-[15px]" /></Row>
          <Check label="移动允许" disabled />
          <Check label="最后发货" disabled />
          <Check label="散装物料" />
          <Check label="反冲" />
          <Check label="提前处理" checked disabled />
          <Check label="第三方订单" disabled />
        </Group>
        <Group title="物料主数据" className="h-[146px]">
          <Row><Label htmlFor="m1">物料类型</Label><Field id="m1" value="LGZR" width="w-[39px]" /></Row>
          <Row><Label htmlFor="m2">采购</Label><Field id="m2" value="F" width="w-[15px]" /></Row>
          <Row><Label htmlFor="m3">特殊采购</Label><Field id="m3" width="w-[23px]" /></Row>
          <Row><Label htmlFor="m4">独立/集中</Label><Field id="m4" width="w-[15px]" /></Row>
          <Check label="虚拟项目" disabled />
        </Group>
        <Group title="值流/数量流" className="h-[146px]">
          <Row><Label htmlFor="v1">科目分配类别</Label><Field id="v1" value="Q" width="w-[15px]" /></Row>
          <Row><Label htmlFor="v2">特殊库存</Label><Field id="v2" value="Q" width="w-[15px]" /></Row>
          <Row><Label htmlFor="v3">评估</Label><Field id="v3" value="M" width="w-[15px]" /></Row>
          <Row><Label htmlFor="v4">消耗</Label><Field id="v4" value="P" width="w-[15px]" /></Row>
          <Row><Label htmlFor="v5">移动类型</Label><Field id="v5" value="281" width="w-[31px]" /></Row>
        </Group>
        <Group title="BOM 标识" className="col-span-2 h-[58px]">
          <Row>
            <Label htmlFor="b1">备件标识</Label>
            <Field id="b1" width="w-[15px]" />
            <span className="w-[73px]" />
            <Label htmlFor="b2">物料供应标识</Label>
            <Field id="b2" width="w-[15px]" />
          </Row>
        </Group>
      </div>
      <Group title="可用性数据" className="h-[58px]">
        <Row>
          <span className="w-36"><Check label="缺失的部分" disabled /></span>
          <Label htmlFor="a1" width="w-36">允许数量</Label>
          <Field id="a1" value="0" width="w-[151px]" />
          <span className="w-px" />
          <Field label="单位" value="PC" width="w-[31px]" />
          <Slash />
          <Field label="总数" value="50" width="w-[143px]" />
        </Row>
      </Group>
    </div>
  );
}

function ParamPanel() {
  return (
    <div className="h-[413px] rounded-tl-[3px] border-t border-b border-l border-t-[#6e99c4] border-b-[#8fb0d0] border-l-[#8fb0d0] bg-[#deeaf4] pt-[23px] pl-[7px] shadow-[inset_0_3px_0_#8fb3dc]">
      <div className="flex flex-col gap-[2px] pb-[2px]">
        <Row>
          <Label htmlFor="st">状态</Label>
          <Field id="st" value="REL" width="w-[207px]" font="text-xs" />
          <button type="button" aria-label="状态信息" className={`${goldBtn} ${squareBtn} ml-px`}><InfoIcon /></button>
        </Row>
        <Row>
          <Label htmlFor="wbs">WBS 要素</Label>
          <Field id="wbs" value="B6888000230000002" width="w-[199px]" edit />
          <div className="relative ml-2 flex">
            <Label htmlFor="gwbs" width="w-[129px]">组合 WBS 要素</Label>
            <Field id="gwbs" value="B688800023000000" width="w-[199px]" />
            <span className="pointer-events-none absolute -top-[6px] -right-[15px] -bottom-[5px] left-0 border-[3px] border-[#fa3434]" />
          </div>
        </Row>
        <Row>
          <Label htmlFor="res">预留/采购申请</Label>
          <div className="relative flex items-center">
            <select id="res" className={`${fieldBase} w-[207px] appearance-none bg-[#dfebf5] text-xs`}>
              <option>3 立即</option>
            </select>
            <span className="pointer-events-none absolute right-[4px]"><DropMark /></span>
          </div>
        </Row>
        <Row>
          <Label htmlFor="ptype" size="text-[15px] leading-[18px]">采购类型</Label>
          <Field id="ptype" value="WBS 要素初步请求" width="w-[327px]" font={monoLarge} />
        </Row>
      </div>
      <ParamGroups />
    </div>
  );
}

export default function App() {
  return (
    <div className="relative flex min-h-screen flex-col overflow-hidden bg-[#fdfdfe] font-['Noto_Sans','Noto_Sans_CJK_SC',sans-serif] text-black">
      <MenuBar />
      <SystemBar />
      <main className="mt-[7px] ml-[13px] flex flex-1 flex-col border-l border-[#b7c8da] bg-[#e8f0f7]">
        <TitleBar />
        <AppBar />
        <div className="flex flex-1">
          <LeftPane />
          <VSplitter />
          <div className="min-w-0 flex-1 pt-2 pl-[3px]">
            <HeaderGroup />
            <ItemRow />
            <div className="mt-[26px]">
              <TabStrip />
              <ParamPanel />
            </div>
          </div>
        </div>
      </main>
      <span className="absolute right-4 bottom-[6px] font-['Roboto','Noto_Sans_CJK_SC',sans-serif] text-sm leading-5 text-[#85898e] [text-shadow:1px_1px_1px_#fff]">
        CSDN @SAP柱子
      </span>
    </div>
  );
}
